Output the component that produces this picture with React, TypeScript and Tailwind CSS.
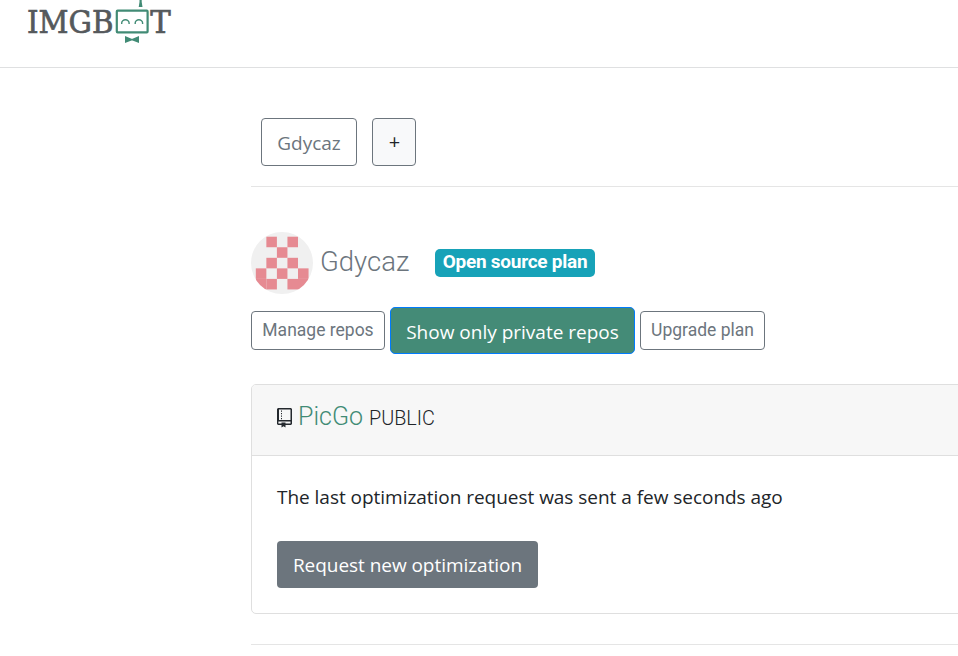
import type { ReactNode } from "react";

const segoe = "font-['Open_Sans','Noto_Sans',sans-serif]";
const roboto = "font-[Roboto,sans-serif]";

function Logo() {
  return (
    <svg width="146" height="46" viewBox="27 0 146 46" className="block" role="img" aria-label="IMGBOT">
      <g fill="#55595c" stroke="#55595c" strokeWidth="0.7" fontFamily="'DejaVu Serif', serif" fontSize="31.5">
        <text x="27" y="33.2" textLength="86.5" lengthAdjust="spacingAndGlyphs">IMGB</text>
        <text x="150.3" y="33.2" textLength="20.5" lengthAdjust="spacingAndGlyphs">T</text>
      </g>
      <g fill="none" stroke="#418b75">
        <rect x="116.8" y="10.6" width="30.8" height="21.8" rx="0.8" strokeWidth="2.2" />
        <path d="M121.7 24v-1a3.7 3.3 0 0 1 7.4 0v1M135.2 24v-1a3.7 3.3 0 0 1 7.4 0v1" strokeWidth="1.4" />
      </g>
      <path fill="#418b75" d="M139.5 0h2.2v2l.8 5h-3.8l.8-5zM125 36l6.5 2.7h1L139 36v7l-6.5-2.6h-1L125 43z" />
    </svg>
  );
}

const pattern = [".x.x.", "..x..", ".x.x.", "x.x.x", "xx.xx"];

function Avatar() {
  return (
    <svg width="62" height="62" viewBox="0 0 62 62" className="block rounded-full bg-[#f0f0f0]">
      {pattern.flatMap((row, y) =>
        [...row].map((cell, x) =>
          cell === "x" ? (
            <rect key={`${x}-${y}`} x={4.8 + x * 10.55} y={4.7 + y * 10.55} width="10.55" height="10.55" fill="#e68a92" />
          ) : null
        )
      )}
    </svg>
  );
}

function RepoIcon() {
  return (
    <svg width="15" height="20" viewBox="0 0 15 20" className="block" fill="#24292e">
      <path fillRule="evenodd" d="M1 0h13l1 1v15l-1 1H8.5v2.5L6.500 18.200 4.500 19.500V17H1l-1-1V1zM2 1.400V12H13.500V1.400zM1.400 13.400v2.200h3.100v-1.200h4v1.200h5v-2.200z" />
      <path d="M4 2.500h1v1.200H4zM4 5h1v1.200H4zM4 7.500h1v1.200H4zM4 10h1v1.200H4z" />
    </svg>
  );
}

function SmallButton({ className, children }: { className: string; children: ReactNode }) {
  return (
    <button className={`h-[39px] rounded-[4px] border border-[#6c757d] text-[17.5px] leading-[37px] text-[#6c757d] whitespace-nowrap ${roboto} ${className}`}>
      {children}
    </button>
  );
}

export default function App() {
  return (
    <div className={`h-[656px] w-[958px] overflow-hidden bg-white text-[#212529] ${segoe}`}>
      <header className="h-[68px] border-b border-[#dfe0e1] pl-[27px]">
        <Logo />
      </header>
      <main className="ml-[251px]">
        <nav className="flex h-[119px] gap-[15px] border-b border-[#e5e5e5] pt-[50px] pl-[10px]">
          <button className="h-[48px] w-[96px] rounded-[4px] border border-[#6c757d] pt-[2px] text-[19px] leading-[44px] text-[#6c757d]">Gdycaz</button>
          <button className="h-[48px] w-[44px] rounded-[4px] border border-[#6c757d] bg-[#f8f9fa] pl-px text-[20px] leading-[46px] font-medium">+</button>
        </nav>
        <div className={`flex h-[62px] items-center mt-[45px] ${roboto}`}>
          <Avatar />
          <h3 className="ml-[7px] w-[115px] text-[27.5px] leading-[58px] pb-[2px] font-light text-[#6c757d]">Gdycaz</h3>
          <span className="h-[28px] w-[160px] rounded-[5px] bg-[#17a2b8] text-center text-[19px] leading-[26px] font-bold tracking-[-0.25px] text-white whitespace-nowrap">Open source plan</span>
        </div>
        <div className="mt-[13px] flex h-[47px] items-center gap-[5px]">
          <SmallButton className="w-[134px]">Manage repos</SmallButton>
          <button className="h-[47px] w-[245px] rounded-[5px] border border-[#007bff] bg-[#448b77] pt-[2px] text-[19px] leading-[45px] text-white whitespace-nowrap">Show only private repos</button>
          <SmallButton className="w-[125px]">Upgrade plan</SmallButton>
        </div>
        <section className="mt-[30px] h-[230px] w-[720px] rounded-[5px] border border-[#dfdfdf]">
          <div className={`flex h-[71px] border-b border-[#dfdfdf] bg-[#f7f7f7] rounded-t-[4px] pl-[25px] font-light ${roboto}`}>
            <div className="pt-[23px]"><RepoIcon /></div>
            <h4 className="ml-[6px] w-[71px] pt-[14px] text-[25px] leading-[36px] text-[#418b75]">PicGo</h4>
            <span className="pt-[19px] text-[19.8px] leading-[30px]">PUBLIC</span>
          </div>
          <div className="pl-[25px] pt-[26px]">
            <p className="text-[19px] leading-[30px] tracking-[-0.03px] whitespace-nowrap">The last optimization request was sent a few seconds ago</p>
            <button className="mt-[29px] h-[47px] w-[261px] rounded-[4px] bg-[#6c757d] pt-[2px] text-[19px] leading-[45px] tracking-[-0.04px] text-white whitespace-nowrap">Request new optimization</button>
          </div>
        </section>
        <hr className="mt-[30px] border-[#e5e5e5]" />
      </main>
    </div>
  );
}
